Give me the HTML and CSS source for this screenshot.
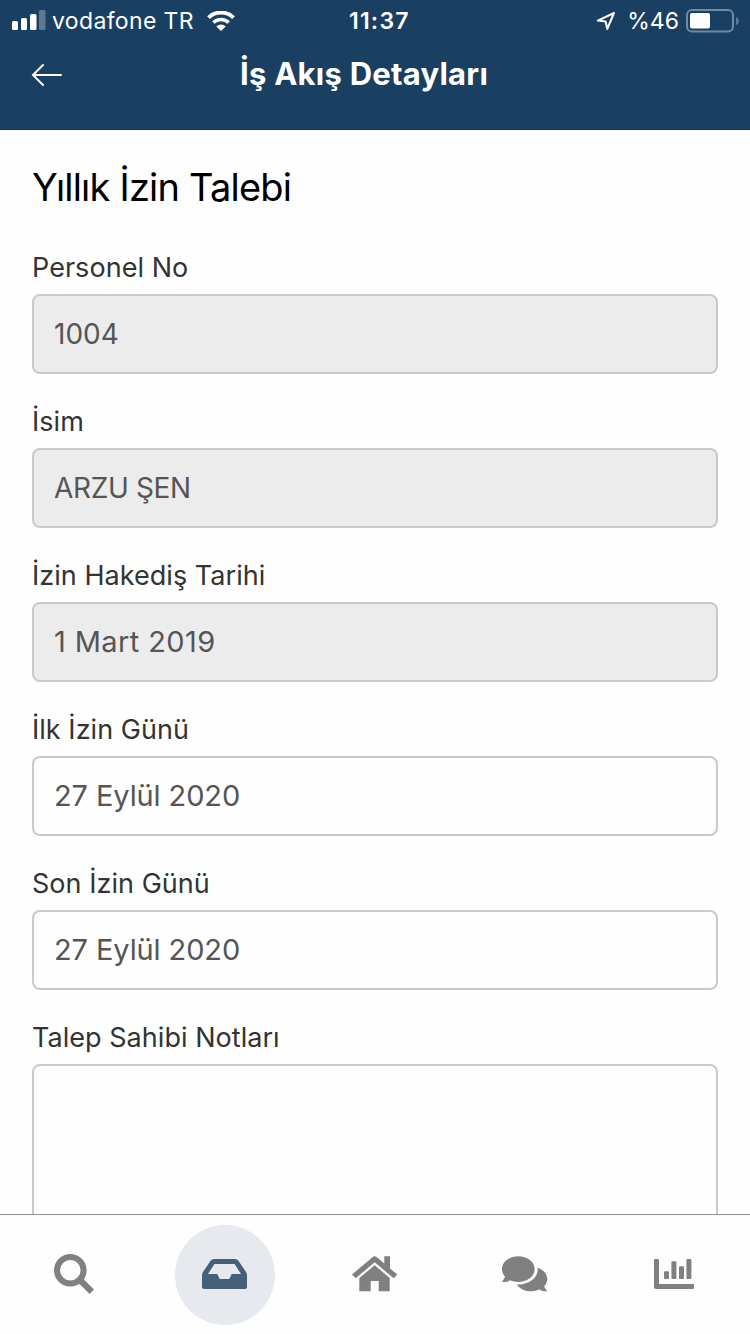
FILE: index.html
```html
<!DOCTYPE html>
<html lang="tr">
<head>
  <meta charset="UTF-8" />
  <meta name="viewport" content="width=device-width, initial-scale=1.0"/>
  <title>İş Akış Detayları</title>
  <link rel="stylesheet" href="styles.css">
</head>
<body>
  <header class="header">
    <div class="status-bar">
      <div class="status-left">
        <svg class="signal" width="34" height="22" viewBox="0 0 34 22">
          <rect x="0" y="11" width="6" height="9" rx="1.5"/>
          <rect x="9" y="8" width="6" height="12" rx="1.5"/>
          <rect x="18" y="4" width="6.5" height="16" rx="1.5"/>
          <rect class="faded" x="27" y="0" width="6.5" height="20" rx="1.5"/>
        </svg>
        <span class="carrier">vodafone TR</span>
        <svg class="wifi" width="28" height="20" viewBox="0 0 28 20">
          <path d="M1.5 6.6A18 18 0 0 1 26.5 6.6" stroke-width="4"/>
          <path d="M6.3 11.5A11.2 11.2 0 0 1 21.7 11.5" stroke-width="3.4"/>
          <path class="dot" d="M14 20L9.3 15.4A6.7 6.7 0 0 1 18.7 15.4Z"/>
        </svg>
      </div>
      <span class="time">11:37</span>
      <div class="status-right">
        <svg class="location" width="20" height="20" viewBox="0 0 20 20">
          <path d="M18 2L1.8 9.6L9.6 10.4L11.2 18Z"/>
        </svg>
        <span class="percent">%46</span>
        <svg class="battery" width="54" height="24" viewBox="0 0 54 24">
          <rect class="shell" x="1" y="1" width="46" height="21.5" rx="5"/>
          <rect x="4" y="4" width="20" height="15.5" rx="2"/>
          <path class="faded" d="M50 8Q52.8 9 52.8 12T50 16Z"/>
        </svg>
      </div>
    </div>
    <div class="title-bar">
      <svg class="back" width="32" height="24" viewBox="0 0 32 24">
        <path d="M30 13H2M12 3L2 13L12 23"/>
      </svg>
      <h1>İş Akış Detayları</h1>
    </div>
  </header>

  <main class="content">
    <h2>Yıllık İzin Talebi</h2>
    <form class="form">
      <div class="field">
        <label for="personelNo">Personel No</label>
        <input id="personelNo" type="text" value="1004" disabled>
      </div>
      <div class="field">
        <label for="isim">İsim</label>
        <input id="isim" class="name" type="text" value="ARZU ŞEN" disabled>
      </div>
      <div class="field">
        <label for="hakedis">İzin Hakediş Tarihi</label>
        <input id="hakedis" class="date earned" type="text" value="1 Mart 2019" disabled>
      </div>
      <div class="field">
        <label for="ilkGun">İlk İzin Günü</label>
        <input id="ilkGun" class="date" type="text" value="27 Eylül 2020">
      </div>
      <div class="field">
        <label for="sonGun">Son İzin Günü</label>
        <input id="sonGun" class="date" type="text" value="27 Eylül 2020">
      </div>
      <div class="field">
        <label for="notlar">Talep Sahibi Notları</label>
        <textarea id="notlar"></textarea>
      </div>
    </form>
  </main>

  <nav class="tab-bar">
    <a class="tab">
      <svg viewBox="0 0 48 48">
        <circle cx="19.3" cy="19.2" r="13.3" fill="none" stroke="currentColor" stroke-width="6"/>
        <path d="M28.5 28.5L40.8 40.8" stroke="currentColor" stroke-width="6.2"/>
      </svg>
    </a>
    <a class="tab active">
      <svg viewBox="0 0 48 48">
        <path fill-rule="evenodd" d="M13 8H34Q36.3 8 37.6 10L45 21Q46 22.5 46 24V35.5Q46 38 43.5 38H3.5Q1 38 1 35.5V24Q1 22.5 2 21L9.4 10Q10.7 8 13 8ZM13.4 13L7 23H16.3L18.7 28H28.3L30.7 23H40L33.6 13Z"/>
      </svg>
    </a>
    <a class="tab">
      <svg viewBox="0 0 48 48">
        <path d="M33.3 5.3H39V17.5L46.3 23.5L42.7 27.3L23.7 11.3L4.7 27.3L1 23.5L21.5 6.2Q23.7 4.5 25.9 6.2L33.3 12.5Z"/>
        <path d="M23.7 14.3L38.7 27V40.3H27.7V30H19.7V40.3H8.3V27Z"/>
      </svg>
    </a>
    <a class="tab">
      <svg viewBox="0 0 48 48">
        <path d="M17.3 5.3C26.3 5.3 33.7 11 33.7 18S26.3 31 17.3 31C14.3 31 11.6 30.4 9.2 29.3C6.8 30.6 4 31.2 1.4 30.9C1 30.5 1.3 30.1 1.7 29.7C3 28.3 3.7 26.9 4 25.6C2.1 23.5 1 20.9 1 18C1 11 8.3 5.3 17.3 5.3Z"/>
        <path d="M36.6 16.7C42.3 18.6 46.3 23 46.3 28C46.3 30.7 45.2 33.2 43.3 35.2C43.6 36.9 44.5 38.2 45.8 39.4C46.3 39.9 46.2 40.3 45.7 40.3C43 40.6 40.5 39.9 38.2 38.6C35.9 39.7 33.2 40.3 30.3 40.3C24 40.3 18.6 37.6 15.7 33.4C27 34.2 36.7 27.5 36.7 18.5Z"/>
      </svg>
    </a>
    <a class="tab">
      <svg viewBox="0 0 48 48">
        <path d="M4 8H7Q8 8 8 9V33H42Q43 33 43 34V37Q43 38 42 38H5Q3 38 3 36V9Q3 8 4 8Z"/>
        <rect x="13" y="20.3" width="5" height="7.7" rx="1"/>
        <rect x="20.4" y="10.3" width="5" height="17.7" rx="1"/>
        <rect x="28" y="15.3" width="5" height="12.7" rx="1"/>
        <rect x="35.4" y="8" width="5" height="20" rx="1"/>
      </svg>
    </a>
  </nav>
</body>
</html>
```
FILE: styles.css
```css
* {
  box-sizing: border-box;
}
body {
  margin: 0;
  height: 1334px;
  display: flex;
  flex-direction: column;
  overflow: hidden;
  font-family: Inter, 'Liberation Sans', sans-serif;
  background-color: #fefefe;
}
.header {
  flex: none;
  height: 130px;
  background-color: #193f62;
  border-bottom: 1px solid #12355a;
  color: #fff;
}
.status-bar {
  display: grid;
  grid-template-columns: 349px 1fr auto;
  align-items: center;
  height: 41px;
  padding-right: 10px;
  font-size: 23px;
}
.status-left,
.status-right {
  display: flex;
  align-items: center;
}
.status-left {
  padding-left: 12px;
}
.signal,
.battery,
.dot {
  fill: #fff;
}
.faded {
  fill: #5d7893;
}
.carrier {
  width: 142px;
  margin-left: 6px;
  letter-spacing: 0.35px;
  white-space: nowrap;
}
.wifi {
  margin-left: 13px;
}
.wifi path {
  fill: none;
  stroke: #fff;
}
.wifi .dot {
  fill: #fff;
  stroke: none;
}
.time {
  font-weight: 600;
  letter-spacing: 1.2px;
}
.location {
  fill: none;
  stroke: #fff;
  stroke-width: 2;
  stroke-linejoin: round;
}
.percent {
  margin: 0 7px 0 11px;
}
.battery .shell {
  fill: none;
  stroke: #7189a1;
  stroke-width: 2;
}
.title-bar {
  display: flex;
  align-items: center;
  height: 66px;
  padding-left: 31px;
}
.back {
  fill: none;
  stroke: #fff;
  stroke-width: 2;
  stroke-linecap: round;
}
h1 {
  margin: 0 0 0 177px;
  font-size: 31px;
  font-weight: 700;
  line-height: 40px;
  letter-spacing: 0.25px;
}
.content {
  flex: 1;
  min-height: 0;
  overflow: hidden;
  padding: 33px 32px 0;
}
h2 {
  margin: 0 0 29px;
  font-size: 38px;
  font-weight: 400;
  line-height: 48px;
  letter-spacing: -0.8px;
  color: #000;
}
.form {
  display: flex;
  flex-direction: column;
  gap: 20px;
}
.field {
  display: flex;
  flex-direction: column;
}
label {
  height: 54px;
  font-size: 27px;
  line-height: 56px;
  letter-spacing: 0.04px;
  color: #333;
}
input,
textarea {
  width: 100%;
  height: 80px;
  padding: 0 20px;
  border: 2px solid #c9c9c9;
  border-radius: 8px;
  background-color: #fefefe;
  font-family: inherit;
  font-size: 28px;
  color: #555;
}
input:disabled {
  background-color: #ececec;
}
.name {
  letter-spacing: -0.35px;
}
.date {
  padding-bottom: 2px;
  font-size: 29px;
  letter-spacing: -0.1px;
}
.earned {
  letter-spacing: 0.4px;
}
textarea {
  height: 200px;
  resize: none;
}
.tab-bar {
  flex: none;
  display: flex;
  align-items: center;
  justify-content: space-around;
  height: 120px;
  padding-top: 1px;
  border-top: 1px solid #929292;
  background-color: #fefefe;
}
.tab {
  display: flex;
  align-items: center;
  justify-content: center;
  width: 100px;
  height: 100px;
  border-radius: 50%;
  color: #808080;
}
.tab svg {
  width: 48px;
  height: 48px;
  fill: currentColor;
}
.tab.active {
  background-color: #e6e9ee;
  color: #456077;
}
```
